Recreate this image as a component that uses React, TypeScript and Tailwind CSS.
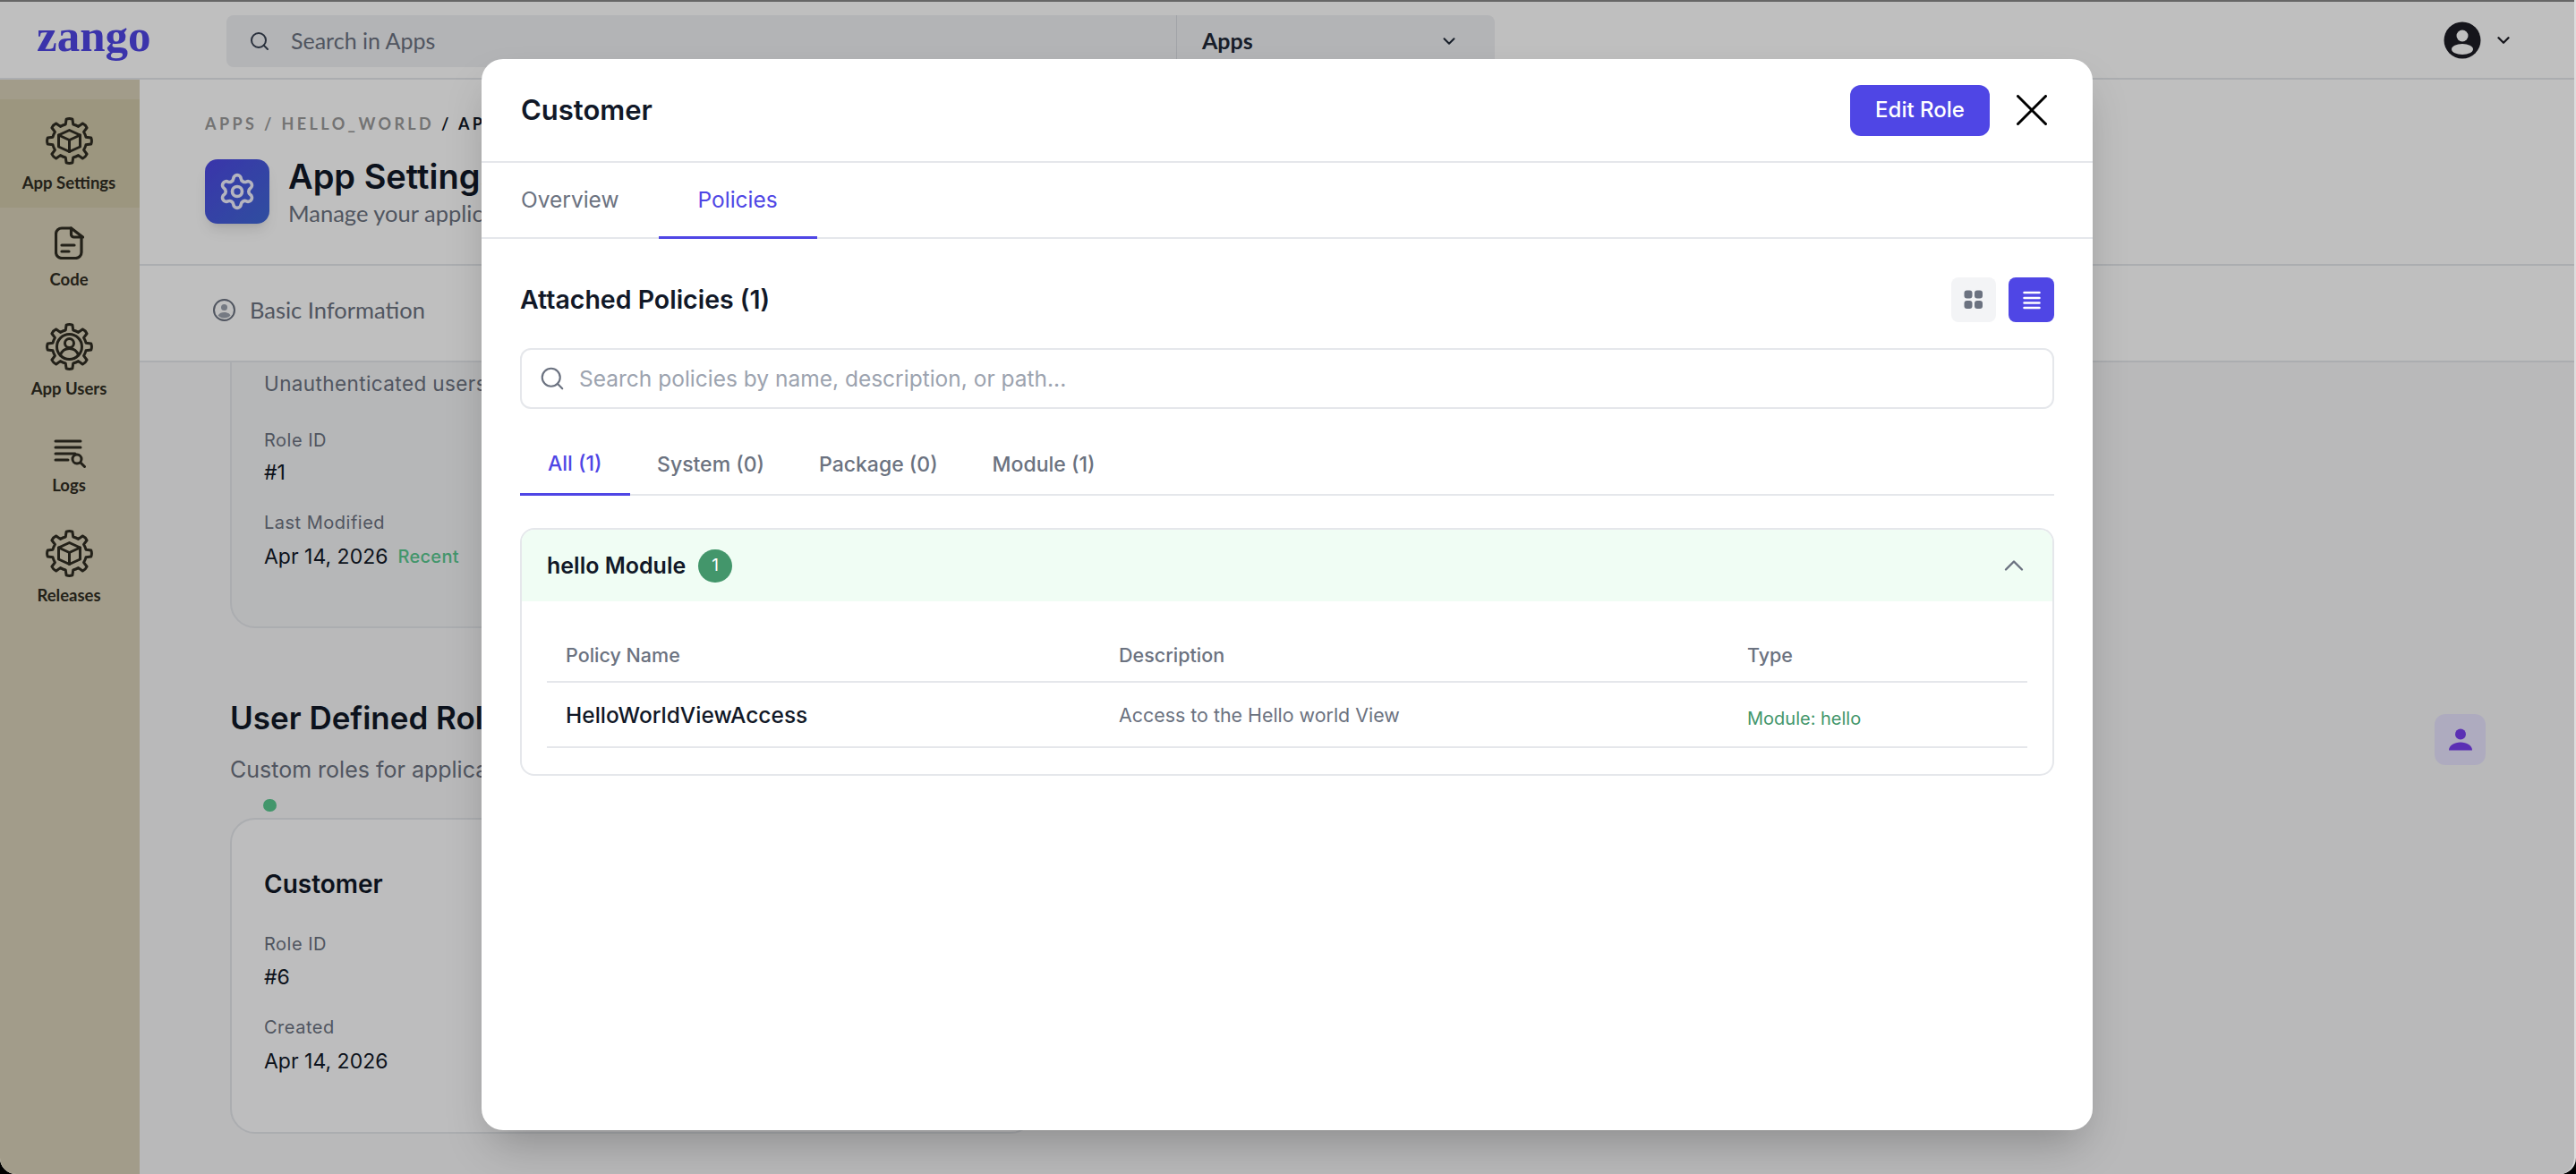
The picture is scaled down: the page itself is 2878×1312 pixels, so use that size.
import { ChevronDown, ChevronUp, Search, Settings } from "lucide-react";

// 8 toothed gear used by the sidebar icons, centred on 26.5,26.5
const gearPath = (() => {
  const pt = (deg: number, r: number) => {
    const a = ((deg - 90) * Math.PI) / 180;
    return `${(26.5 + r * Math.cos(a)).toFixed(2)} ${(26.5 + r * Math.sin(a)).toFixed(2)}`;
  };
  let d = "";
  for (let i = 0; i < 8; i++) {
    const c = i * 45;
    d += `${i === 0 ? "M" : "A19 19 0 0 1"} ${pt(c - 13, 19)} `;
    d += `L${pt(c - 8, 24.5)} Q${pt(c, 25.6)} ${pt(c + 8, 24.5)} L${pt(c + 13, 19)} `;
  }
  return d + "A19 19 0 0 1 " + pt(-13, 19) + "Z";
})();

function Gear({ children }: { children: React.ReactNode }) {
  return (
    <svg width="53" height="53" viewBox="0 0 53 53" fill="none" stroke="currentColor" strokeWidth="3" strokeLinejoin="round" strokeLinecap="round">
      <path d={gearPath} />
      {children}
    </svg>
  );
}

const cube = (
  <>
    <path d="M26.5 14.5l12 5.5v13l-12 5.5-12-5.5V20z" />
    <path d="M14.5 20l12 5.5 12-5.5M26.5 25.5v13" />
  </>
);

const userInGear = (
  <>
    <circle cx="26.5" cy="26.5" r="14" />
    <circle cx="26.5" cy="22.5" r="5" />
    <path d="M16.5 36c1.5-5 5.5-7.5 10-7.5s8.5 2.5 10 7.5" />
  </>
);

function CodeIcon() {
  return (
    <svg width="33" height="37" viewBox="0 0 33 37" fill="none" stroke="currentColor" strokeWidth="3.2" strokeLinecap="round" strokeLinejoin="round">
      <path d="M18.5 2H8a6.5 6.5 0 0 0-6.5 6.5v20.5A6.5 6.5 0 0 0 8 35.500h15.500a6.500 6.500 0 0 0 6.500-6.500V13" />
      <path d="M18.500 2v7a3 3 0 0 0 3 3h10z" />
      <path d="M8 21h14M8 28h8" />
    </svg>
  );
}

function LogsIcon() {
  return (
    <svg width="37" height="33" viewBox="0 0 37 33" fill="none" stroke="currentColor" strokeWidth="3" strokeLinecap="round">
      <path d="M3 3h28M3 10h28M3 17h22M3 24h14" />
      <circle cx="27" cy="23" r="5" />
      <path d="M31 27l4.500 4.500" />
    </svg>
  );
}

const navItems = [
  { label: "App Settings", icon: <Gear>{cube}</Gear>, box: "pt-[20px] pb-[14px] gap-[6px] bg-[#d0c8aa]" },
  { label: "Code", icon: <CodeIcon />, box: "pt-[21px] pb-[15px] gap-[8px]" },
  { label: "App Users", icon: <Gear>{userInGear}</Gear>, box: "pt-[20px] pb-[14px] gap-[6px]" },
  { label: "Logs", icon: <LogsIcon />, box: "pt-[28px] pb-[16px] gap-[5px]" },
  { label: "Releases", icon: <Gear>{cube}</Gear>, box: "pt-[20px] pb-[14px] gap-[6px]" },
];

function Sidebar() {
  return (
    <aside className="w-[156px] shrink-0 bg-[#d9d1b9] pt-[22px] font-['Lato',sans-serif] text-[#2f2c22]">
      {navItems.map((item) => (
        <div key={item.label} className={`flex flex-col items-center pr-[2px] ${item.box}`}>
          {item.icon}
          <span className="text-[18.5px] leading-[28px] font-bold">{item.label}</span>
        </div>
      ))}
    </aside>
  );
}

function TopBar() {
  return (
    <header className="h-[89px] shrink-0 border-t-2 border-b-2 border-t-[#888888] border-b-[#e5e7eb] bg-white flex items-center font-['Lato',sans-serif]">
      <div className="w-[253px] shrink-0 pl-[41px] -mt-[9px] font-['Liberation_Serif',serif] text-[51px] leading-none font-bold text-[#4f46e5]">
        zango
      </div>
      <div className="mt-[2px] flex h-[58px] w-[1417px] items-center rounded-[8px] bg-[#eff0f3]">
        <div className="flex flex-1 items-center pl-[25px] text-[#6b7280]">
          <Search size={24} strokeWidth={2} className="text-[#374151]" />
          <span className="ml-[23px] text-[25px]">Search in Apps</span>
        </div>
        <div className="flex h-full w-[356px] items-center justify-between border-l border-[#d9dbe0] pl-[28px] pr-[40px]">
          <span className="text-[25px] font-bold text-[#1f2937]">Apps</span>
          <ChevronDown size={22} strokeWidth={2.2} className="text-[#1f2937]" />
        </div>
      </div>
      <div className="ml-auto mr-[68px] flex items-center gap-[14px] text-[#1c1c24]">
        <svg width="42" height="42" viewBox="0 0 42 42">
          <circle cx="21" cy="21" r="20.500" fill="currentColor" />
          <circle cx="21" cy="16" r="6.500" fill="#ffffff" />
          <ellipse cx="21" cy="31" rx="12" ry="6" fill="#ffffff" />
        </svg>
        <ChevronDown size={22} strokeWidth={2.5} />
      </div>
    </header>
  );
}

function RoleField({ label, value, extra, gap }: { label: string; value: string; extra?: string; gap: string }) {
  return (
    <div className={`flex flex-col ${gap}`}>
      <span className="text-[20px] leading-[28px] tracking-[0.5px] text-[#6b7280]">{label}</span>
      <span className="flex items-center gap-[11px] text-[23px] leading-[30px] text-[#111827]">
        {value}
        {extra && <span className="text-[20px] font-medium tracking-[0.3px] text-[#59c88f]">{extra}</span>}
      </span>
    </div>
  );
}

function MainPage() {
  return (
    <main className="flex min-w-0 flex-1 flex-col bg-[#f7f7f9]">
      <div className="flex h-[208px] shrink-0 flex-col border-b-2 border-[#e5e7eb] bg-white pl-[73px] pt-[37px]">
        <div className="font-['Lato',sans-serif] text-[18px] leading-[24px] font-bold tracking-[3.4px] whitespace-nowrap text-[#9a9a9a]">
          APPS / HELLO_WORLD <span className="text-[#111827]">/ APP SETTINGS</span>
        </div>
        <div className="mt-[28px] flex items-start gap-[21px]">
          <div className="flex h-[72px] w-[72px] items-center justify-center rounded-[14px] bg-gradient-to-br from-[#4d46e4] to-[#3f68d5] shadow-lg">
            <Settings size={44} strokeWidth={2} className="text-[#f0f0ff]" />
          </div>
          <div>
            <h1 className="-mt-[4px] font-['Inter',sans-serif] text-[38px] leading-[46px] font-semibold text-[#111827]">App Settings</h1>
            <p className="mt-[3px] font-['Lato',sans-serif] text-[25.5px] leading-[30px] text-[#6b7280]">Manage your application settings</p>
          </div>
        </div>
      </div>
      <div className="flex h-[108px] shrink-0 items-center gap-[16px] border-b-2 border-[#e5e7eb] bg-white pb-[8px] pl-[82px] font-['Lato',sans-serif] text-[25.5px] text-[#6b7280]">
        <svg width="25" height="25" viewBox="0 0 25 25" fill="none">
          <circle cx="12.500" cy="12.500" r="11.500" stroke="#6b7280" strokeWidth="2" />
          <circle cx="12.500" cy="9.500" r="3.500" fill="#9ca3af" />
          <path d="M5.500 18.500c1.500-2.500 4-3.500 7-3.500s5.500 1 7 3.500c-1.800 2-4.300 3-7 3s-5.200-1-7-3z" fill="#9ca3af" />
        </svg>
        Basic Information
      </div>
      <div className="min-h-0 flex-1 overflow-hidden px-[101px] font-['Inter',sans-serif]">
        <div className="-mt-[40px] flex h-[337px] w-[900px] flex-col rounded-[28px] border-2 border-[#e5e7eb] bg-[#f3f4f6] pl-[36px] pt-[47px]">
          <p className="text-[22.5px] leading-[30px] tracking-[0.4px] text-[#6b7280]">Unauthenticated users</p>
          <div className="mt-[34px]">
            <RoleField label="Role ID" value="#1" gap="gap-[7px]" />
          </div>
          <div className="mt-[27px]">
            <RoleField label="Last Modified" value="Apr 14, 2026" extra="Recent" gap="gap-[9px]" />
          </div>
        </div>
        <div className="mt-[78px] flex items-start justify-between">
          <div>
            <h2 className="text-[35px] leading-[44px] font-semibold text-[#111827]">User Defined Roles</h2>
            <p className="mt-[21px] text-[25px] leading-[30px] text-[#6b7280]">Custom roles for application users</p>
          </div>
          <div className="-mr-[2px] mt-[18px] flex h-[57px] w-[57px] items-center justify-center rounded-[12px] bg-[#e9e5ff] text-[#7a3ff0]">
            <svg width="28" height="26" viewBox="0 0 28 26" fill="currentColor">
              <circle cx="14" cy="6.500" r="6" />
              <path d="M1 24.500c0-5.500 6-9 13-9s13 3.500 13 9z" />
            </svg>
          </div>
        </div>
        <div className="ml-[37px] mt-[18px] h-[14px] w-[15px] rounded-full bg-[#59c88f]" />
        <div className="mt-[7px] flex h-[353px] w-[900px] flex-col rounded-[28px] border-2 border-[#e5e7eb] bg-[#fcfcfe] pl-[36px] pt-[54px]">
          <h3 className="text-[28px] leading-[36px] font-semibold text-[#111827]">Customer</h3>
          <div className="mt-[35px]">
            <RoleField label="Role ID" value="#6" gap="gap-[8px]" />
          </div>
          <div className="mt-[27px]">
            <RoleField label="Created" value="Apr 14, 2026" gap="gap-[9px]" />
          </div>
        </div>
      </div>
    </main>
  );
}

function PolicyModal() {
  return (
    <div className="ml-[538px] flex h-[1197px] w-[1800px] flex-col rounded-[24px] bg-white font-['Inter',sans-serif] shadow-2xl">
      <div className="flex h-[116px] shrink-0 items-center justify-between border-b-2 border-[#e5e7eb] pl-[44px] pr-[51px]">
        <h2 className="text-[31px] font-semibold text-[#111827]">Customer</h2>
        <div className="flex items-center gap-[30px]">
          <button className="h-[57px] w-[156px] rounded-[12px] bg-[#4f46e5] text-[24px] font-medium text-white">Edit Role</button>
          <svg width="34" height="34" viewBox="0 0 34 34" fill="none" stroke="#000000" strokeWidth="3" strokeLinecap="round">
            <path d="M1.500 1.500l31 31M32.500 1.500l-31 31" />
          </svg>
        </div>
      </div>

      <div className="flex h-[85px] shrink-0 border-b-2 border-[#e5e7eb] pl-[44px] text-[24.500px]">
        <div className="flex items-center pr-[44px] text-[#6b7280]">Overview</div>
        <div className="-mb-[2px] flex items-center border-b-[3px] border-[#4f46e5] px-[44px] text-[#4f46e5]">Policies</div>
      </div>

      <div className="px-[43px] pt-[43px]">
        <div className="flex h-[50px] items-center justify-between">
          <h3 className="text-[28.5px] font-semibold text-[#111827]">Attached Policies (1)</h3>
          <div className="flex gap-[14px]">
            <button className="flex h-[50px] w-[50px] items-center justify-center rounded-[8px] bg-[#f3f4f6]">
              <svg width="22" height="22" viewBox="0 0 22 22" fill="#6b7280">
                <rect x="0.500" y="0.500" width="9" height="9" rx="3" />
                <rect x="12" y="0.500" width="9" height="9" rx="3" />
                <rect x="0.500" y="12" width="9" height="9" rx="3" />
                <rect x="12" y="12" width="9" height="9" rx="3" />
              </svg>
            </button>
            <button className="flex h-[50px] w-[51px] items-center justify-center rounded-[8px] bg-[#4f46e5]">
              <svg width="20" height="21" viewBox="0 0 20 21" fill="none" stroke="#ffffff" strokeWidth="2.500" strokeLinecap="round">
                <path d="M1.500 2h17M1.500 8h17M1.500 13.500h17M1.500 19h17" />
              </svg>
            </button>
          </div>
        </div>

        <div className="mt-[29px] flex h-[68px] items-center rounded-[12px] border-2 border-[#e5e7eb] pl-[19px]">
          <Search size={30} strokeWidth={1.7} className="text-[#6b7280]" />
          <span className="ml-[15px] text-[24.5px] text-[#9ca3af]">Search policies by name, description, or path...</span>
        </div>

        <div className="mt-[28px] flex h-[69px] border-b-2 border-[#e5e7eb] text-[23px] font-medium text-[#6b7280]">
          <div className="-mb-[2px] flex items-center border-b-[3px] border-[#4f46e5] px-[31px] pt-[1px] text-[#4f46e5]">All (1)</div>
          <div className="flex items-center px-[30.500px] pt-[1px]">System (0)</div>
          <div className="flex items-center px-[30.500px] pt-[1px]">Package (0)</div>
          <div className="flex items-center px-[30.500px] pt-[1px]">Module (1)</div>
        </div>

        <div className="mt-[36px] overflow-hidden rounded-[16px] border-2 border-[#e5e7eb]">
          <div className="flex h-[80px] items-center bg-[#f0fdf4] pl-[28px] pr-[25px]">
            <span className="mt-[1px] text-[25px] font-semibold text-[#111827]">hello Module</span>
            <span className="ml-[14px] flex h-[37px] w-[38px] items-center justify-center rounded-full bg-[#43966b] text-[19px] text-white">1</span>
            <ChevronUp size={36} strokeWidth={1.6} className="ml-auto text-[#6b7280]" />
          </div>
          <div className="px-[28px] pb-[29px]">
            <div className="grid h-[91px] grid-cols-[618px_702px_1fr] items-end border-b-2 border-[#e5e7eb] pb-[15px] pl-[21px] text-[21.5px] leading-[28px] font-medium text-[#6b7280]">
              <span>Policy Name</span>
              <span>Description</span>
              <span>Type</span>
            </div>
            <div className="grid h-[73px] grid-cols-[618px_702px_1fr] items-center border-b-2 border-[#e5e7eb] pl-[21px]">
              <span className="mt-[1px] text-[24.5px] font-medium text-[#111827]">HelloWorldViewAccess</span>
              <span className="mt-[1px] text-[21.4px] text-[#6b7280]">Access to the Hello world View</span>
              <span className="mt-[8px] text-[20px] text-[#43966b]">Module: hello</span>
            </div>
          </div>
        </div>
      </div>
    </div>
  );
}

export default function App() {
  return (
    <div className="h-[1312px] w-full overflow-hidden bg-black">
      <div className="relative flex h-full flex-col overflow-hidden rounded-b-[18px] border-r-2 border-[#dddddd] bg-white">
        <TopBar />
        <div className="flex min-h-0 flex-1">
          <Sidebar />
          <MainPage />
        </div>
        <div className="absolute inset-0 bg-black/25 pt-[66px]">
          <PolicyModal />
        </div>
      </div>
    </div>
  );
}
